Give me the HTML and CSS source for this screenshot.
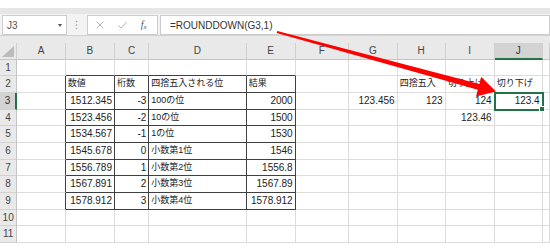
FILE: index.html
```html
<!DOCTYPE html>
<html lang="ja">
<head>
<meta charset="utf-8">
<title>ROUNDDOWN</title>
<link rel="stylesheet" href="styles.css">
</head>
<body>
<div class="top"></div>
<div class="ribbon-edge"></div>
<div class="fbar">
  <div class="namebox"><span>J3</span><span class="dd"></span></div>
  <div class="sep"><svg width="3" height="10" viewBox="0 0 3 10"><circle cx="1.5" cy="1.5" r="0.8" fill="#a8a8a8"/><circle cx="1.5" cy="5" r="0.8" fill="#a8a8a8"/><circle cx="1.5" cy="8.5" r="0.8" fill="#a8a8a8"/></svg></div>
  <div class="fxbox">
    <svg width="8" height="8" viewBox="0 0 8 8"><path d="M0.5 0.5 L7.5 7.5 M7.5 0.5 L0.5 7.5" stroke="#b5b5b5" stroke-width="1" fill="none"/></svg>
    <svg width="9" height="8" viewBox="0 0 9 8"><path d="M0.5 4.5 L3.2 7.2 L8.5 0.8" stroke="#b5b5b5" stroke-width="1" fill="none"/></svg>
    <span class="fx">f<sub>x</sub></span>
  </div>
  <div class="formula">=ROUNDDOWN(G3,1)</div>
</div>
<div class="strip"></div>
<div class="grid">
  <div class="ch corner"><svg width="12" height="11" viewBox="0 0 12 11"><polygon points="12,0 12,11 0,11" fill="#bcbcbc"/></svg></div>
  <div class="ch">A</div><div class="ch">B</div><div class="ch">C</div><div class="ch">D</div><div class="ch">E</div><div class="ch">F</div><div class="ch">G</div><div class="ch">H</div><div class="ch">I</div><div class="ch selh">J</div><div class="ch"></div>

  <div class="rh">1</div><div></div><div class="tb"></div><div class="tb"></div><div class="tb"></div><div class="tb"></div><div></div><div></div><div></div><div></div><div></div><div></div>

  <div class="rh">2</div><div class="tr"></div><div class="t jp">数値</div><div class="t jp">桁数</div><div class="t jp">四捨五入される位</div><div class="t jp">結果</div><div></div><div></div><div class="jp">四捨五入</div><div class="jp">切り上げ</div><div class="jp">切り下げ</div><div></div>

  <div class="rh selr">3</div><div class="tr"></div><div class="t n">1512.345</div><div class="t n">-3</div><div class="t jp">100の位</div><div class="t n">2000</div><div></div><div class="n">123.456</div><div class="n">123</div><div class="n">124</div><div class="n sel">123.4</div><div></div>

  <div class="rh">4</div><div class="tr"></div><div class="t n">1523.456</div><div class="t n">-2</div><div class="t jp">10の位</div><div class="t n">1500</div><div></div><div></div><div></div><div class="n">123.46</div><div></div><div></div>

  <div class="rh">5</div><div class="tr"></div><div class="t n">1534.567</div><div class="t n">-1</div><div class="t jp">1の位</div><div class="t n">1530</div><div></div><div></div><div></div><div></div><div></div><div></div>

  <div class="rh">6</div><div class="tr"></div><div class="t n">1545.678</div><div class="t n">0</div><div class="t jp">小数第1位</div><div class="t n">1546</div><div></div><div></div><div></div><div></div><div></div><div></div>

  <div class="rh">7</div><div class="tr"></div><div class="t n">1556.789</div><div class="t n">1</div><div class="t jp">小数第2位</div><div class="t n">1556.8</div><div></div><div></div><div></div><div></div><div></div><div></div>

  <div class="rh">8</div><div class="tr"></div><div class="t n">1567.891</div><div class="t n">2</div><div class="t jp">小数第3位</div><div class="t n">1567.89</div><div></div><div></div><div></div><div></div><div></div><div></div>

  <div class="rh">9</div><div class="tr"></div><div class="t n">1578.912</div><div class="t n">3</div><div class="t jp">小数第4位</div><div class="t n">1578.912</div><div></div><div></div><div></div><div></div><div></div><div></div>

  <div class="rh">10</div><div></div><div></div><div></div><div></div><div></div><div></div><div></div><div></div><div></div><div></div><div></div>

  <div class="rh">11</div><div></div><div></div><div></div><div></div><div></div><div></div><div></div><div></div><div></div><div></div><div></div>
</div>
<svg class="arrow" width="550" height="250" viewBox="0 0 550 250"><polygon points="277.3,31 479.4,83.9 481.2,77.1 496,91.5 476,96.5 477.8,89.7 276.7,33" fill="#ff0000"/></svg>
</body>
</html>
```

FILE: styles.css
```css
html, body {
  margin: 0;
  padding: 0;
}
body {
  width: 550px;
  height: 250px;
  overflow: hidden;
  background: #ffffff;
  position: relative;
  font-family: "Liberation Sans", "Noto Sans CJK JP", sans-serif;
}
.top {
  height: 8px;
  background: #ffffff;
}
.ribbon-edge {
  height: 6px;
  background: #e6e6e6;
}
.fbar {
  height: 22px;
  box-sizing: border-box;
  background: #f3f3f3;
  border-bottom: 1px solid #d2d2d2;
  display: flex;
  align-items: flex-start;
  padding-top: 1px;
}
.namebox {
  margin-left: 2px;
  width: 67px;
  height: 20px;
  box-sizing: border-box;
  background: #ffffff;
  border: 1px solid #cdcdcd;
  display: flex;
  align-items: center;
  padding-left: 4px;
  padding-right: 4px;
  font-size: 10px;
  color: #555555;
}
.dd {
  margin-left: auto;
  width: 0;
  height: 0;
  border-left: 2.5px solid transparent;
  border-right: 2.5px solid transparent;
  border-top: 3px solid #555555;
}
.sep {
  width: 21px;
  height: 20px;
  display: flex;
  align-items: center;
  justify-content: center;
}
.fxbox {
  width: 74px;
  height: 20px;
  box-sizing: border-box;
  background: #ffffff;
  border: 1px solid #cdcdcd;
  display: flex;
  align-items: center;
  padding-left: 8px;
  gap: 14px;
}
.fx {
  font-family: "Liberation Serif", serif;
  font-style: italic;
  font-size: 10px;
  color: #555555;
  line-height: 1;
}
.fx sub {
  font-size: 7px;
  vertical-align: -1px;
}
.formula {
  margin-left: 2px;
  flex: 1 0 390px;
  height: 20px;
  box-sizing: border-box;
  background: #ffffff;
  border: 1px solid #cdcdcd;
  padding-left: 9px;
  display: flex;
  align-items: center;
  font-size: 10px;
  color: #333333;
}
.strip {
  height: 7px;
  background: #e9e9e9;
}
.grid {
  display: grid;
  grid-template-columns: 17.3px 48.4px 49.3px 34.3px 97.4px 49px 53.3px 48.7px 48px 49px 48px 1fr;
  grid-auto-rows: 16.67px;
  font-size: 10px;
  color: #222222;
}
.grid > div {
  box-sizing: border-box;
  border-right: 1px solid #dcdcdc;
  border-bottom: 1px solid #dcdcdc;
  white-space: nowrap;
  overflow: hidden;
  padding: 0 2px;
  line-height: 15.67px;
}
.grid > .ch {
  background: #e9e9e9;
  border-right-color: #cfcfcf;
  border-bottom-color: #c4c4c4;
  text-align: center;
  color: #444444;
  padding: 0;
}
.grid > .corner {
  display: flex;
  justify-content: flex-end;
  align-items: flex-end;
  padding: 0 2px 2px 0;
}
.grid > .rh {
  background: #e9e9e9;
  border-right-color: #c4c4c4;
  border-bottom-color: #d2d2d2;
  text-align: center;
  color: #444444;
  padding: 0;
}
.grid > .selh {
  background: #d3d3d3;
  border-bottom: 2px solid #217346;
  color: #333333;
}
.grid > .selr {
  background: #d3d3d3;
  border-right: 2px solid #217346;
  color: #333333;
}
.grid > .n {
  text-align: right;
}
.grid > .jp {
  font-size: 9px;
}
.grid > .t {
  border-right-color: #404040;
  border-bottom-color: #404040;
}
.grid > .tr {
  border-right-color: #404040;
}
.grid > .tb {
  border-bottom-color: #404040;
}
.grid > .sel {
  position: relative;
  overflow: visible;
  z-index: 1;
  outline: 2px solid #217346;
  outline-offset: -1px;
}
.grid > .sel::after {
  content: "";
  position: absolute;
  right: -3px;
  bottom: -3px;
  width: 4px;
  height: 4px;
  background: #217346;
  border: 1px solid #ffffff;
}
.arrow {
  position: absolute;
  left: 0;
  top: 0;
  pointer-events: none;
}
```
